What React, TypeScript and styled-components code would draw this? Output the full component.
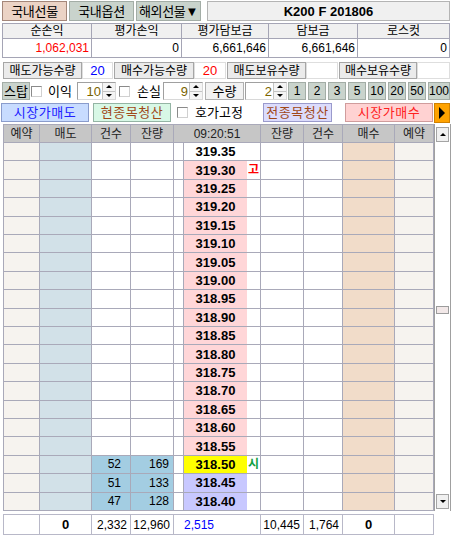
import React from 'react';
import styled, {createGlobalStyle} from 'styled-components';

const GlobalStyle = createGlobalStyle`
	* {
		box-sizing: border-box;
	}
	body {
		margin: 0;
		background: #fff;
		font-family: 'Liberation Sans', 'Noto Sans CJK KR', sans-serif;
		font-size: 12px;
		color: #000;
	}
`;

const StyledScreen = styled.div`
	width: 451px;
	height: 535px;
	padding-top: 1px;
	overflow: hidden;
	display: flex;
	flex-direction: column;
`;

/* top tabs */
const StyledTopBar = styled.div`
	display: flex;
	height: 20px;
	padding-left: 2px;
	gap: 2px;
`;

const StyledTab = styled.div<{$active?: boolean}>`
	width: 65px;
	display: flex;
	align-items: center;
	justify-content: center;
	font-size: 13px;
	line-height: 1;
	letter-spacing: -0.3px;
	background: ${(p) => (p.$active ? '#ebd3c5' : '#c9d3cc')};
	border: 1px solid ${(p) => (p.$active ? '#a4877a' : '#a3ada6')};
`;

const StyledTitle = styled.div`
	margin-left: 4px;
	width: 243px;
	display: flex;
	align-items: center;
	justify-content: center;
	background: #f0f0f0;
	border: 1px solid #b4b4b4;
	font-weight: bold;
	font-size: 13px;
`;

/* summary table */
const StyledSummary = styled.div`
	margin: 2px 0 0 2px;
	width: 448px;
	display: grid;
	grid-template-columns: 88px 89px 86px 88px 91px;
	grid-template-rows: 14px 18px;
	gap: 1px;
	padding: 1px;
	background: #a5a5b5;
`;

const StyledSumHead = styled.div`
	background: #f0f0f0;
	display: flex;
	align-items: center;
	justify-content: center;
	line-height: 1;
`;

const StyledSumValue = styled.div<{$color?: string}>`
	background: #fff;
	display: flex;
	align-items: center;
	justify-content: flex-end;
	padding-right: 2px;
	color: ${(p) => p.$color ?? '#000'};
`;

/* quantities */
const StyledQtyRow = styled.div`
	display: flex;
	height: 17px;
	margin: 4px 0 0 3px;
	gap: 1px;
`;

const StyledQtyPair = styled.div`
	display: flex;
`;

const StyledQtyLabel = styled.div<{$w: number}>`
	width: ${(p) => p.$w}px;
	display: flex;
	align-items: center;
	justify-content: center;
	background: #ebebeb;
	border: 1px solid #a6a6a6;
	line-height: 1;
`;

const StyledQtyValue = styled.div<{$w: number; $color?: string}>`
	width: ${(p) => p.$w}px;
	display: flex;
	align-items: center;
	justify-content: center;
	background: #fff;
	border: 1px solid #dedede;
	font-size: 13px;
	color: ${(p) => p.$color ?? '#000'};
`;

/* stop row */
const StyledStopRow = styled.div`
	display: flex;
	align-items: center;
	height: 18px;
	margin-top: 3px;
	padding-left: 2px;
`;

const StyledGrayButton = styled.div<{$w: number; $ml?: number}>`
	width: ${(p) => p.$w}px;
	height: 18px;
	margin-left: ${(p) => p.$ml ?? 0}px;
	display: flex;
	align-items: center;
	justify-content: center;
	background: #c9d3cc;
	border: 1px solid #a3ada6;
	font-size: 13px;
	line-height: 1;
`;

const StyledLightBox = styled.div<{$w: number; $ml?: number}>`
	width: ${(p) => p.$w}px;
	height: 18px;
	margin-left: ${(p) => p.$ml ?? 0}px;
	display: flex;
	align-items: center;
	justify-content: center;
	background: #f2f2f2;
	border: 1px solid #b0b0b0;
	font-size: 13px;
	line-height: 1;
`;

const StyledCheck = styled.div<{$ml?: number}>`
	width: 11px;
	height: 11px;
	margin-left: ${(p) => p.$ml ?? 0}px;
	background: #fff;
	border: 1px solid #8a8a8a;
	border-right-color: #d0d0d0;
	border-bottom-color: #d0d0d0;
	flex-shrink: 0;
`;

const StyledInlineLabel = styled.div<{$w: number; $pl: number}>`
	width: ${(p) => p.$w}px;
	padding-left: ${(p) => p.$pl}px;
	font-size: 13px;
	line-height: 1;
	white-space: nowrap;
`;

const StyledSpin = styled.div<{$w: number; $ml?: number}>`
	width: ${(p) => p.$w}px;
	height: 18px;
	margin-left: ${(p) => p.$ml ?? 0}px;
	display: flex;
	background: #fff;
	border: 1px solid #a0a0a0;
	border-right-color: #d8d8d8;
	border-bottom-color: #d8d8d8;
`;

const StyledSpinValue = styled.div`
	flex: 1;
	display: flex;
	align-items: center;
	justify-content: flex-end;
	padding-right: 1px;
	color: #7a6400;
	font-size: 13px;
`;

const StyledSpinArrows = styled.div`
	width: 13px;
	display: flex;
	flex-direction: column;
	border-left: 1px solid #c4c4c4;
`;

const StyledSpinHalf = styled.div`
	flex: 1;
	display: flex;
	align-items: center;
	justify-content: center;
	background: #f4f4f4;

	& + & {
		border-top: 1px solid #c4c4c4;
	}
`;

const StyledTri = styled.div<{$dir: 'up' | 'down' | 'right'; $size: number}>`
	width: 0;
	height: 0;
	${(p) =>
		p.$dir === 'up'
			? `border-left: ${p.$size}px solid transparent; border-right: ${p.$size}px solid transparent; border-bottom: ${p.$size}px solid #000;`
			: p.$dir === 'down'
			? `border-left: ${p.$size}px solid transparent; border-right: ${p.$size}px solid transparent; border-top: ${p.$size}px solid #000;`
			: `border-top: ${p.$size}px solid transparent; border-bottom: ${p.$size}px solid transparent; border-left: ${p.$size}px solid #000;`}
`;

const StyledNumButton = styled(StyledGrayButton)`
	font-size: 12px;
`;

/* action row */
const StyledActionRow = styled.div`
	display: flex;
	align-items: center;
	height: 19px;
	margin-top: 3px;
`;

const StyledActionButton = styled.div<{
	$w: number;
	$ml?: number;
	$bg: string;
	$border: string;
	$color: string;
}>`
	width: ${(p) => p.$w}px;
	height: 19px;
	margin-left: ${(p) => p.$ml ?? 0}px;
	display: flex;
	align-items: center;
	justify-content: center;
	background: ${(p) => p.$bg};
	border: 1px solid ${(p) => p.$border};
	color: ${(p) => p.$color};
	font-size: 13px;
	line-height: 1;
	letter-spacing: 0.5px;
`;

const StyledPlayButton = styled.div`
	width: 16px;
	height: 20px;
	margin-left: 1px;
	display: flex;
	align-items: center;
	justify-content: center;
	background: #ffa200;
	border: 1px solid #d08000;
`;

/* order book */
const bookColumns = '35px 51px 38px 42px 9px 76px 42px 38px 51px 38px';

const StyledBookArea = styled.div`
	display: flex;
	height: 387px;
	margin-top: 2px;
`;

const StyledBook = styled.div`
	margin-left: 3px;
	width: 431px;
	display: grid;
	grid-template-columns: ${bookColumns};
	grid-template-rows: 17px repeat(20, 1fr);
	gap: 1px;
	padding: 1px;
	background: #a9a9b9;
`;

const StyledHeadCell = styled.div<{$span?: number}>`
	grid-column: span ${(p) => p.$span ?? 1};
	background: #c6c6c6;
	display: flex;
	align-items: center;
	justify-content: center;
	color: #222;
	line-height: 1;
`;

const StyledCell = styled.div<{
	$bg?: string;
	$align?: 'flex-start' | 'center' | 'flex-end';
	$pr?: number;
	$pl?: number;
	$bold?: boolean;
	$color?: string;
	$span?: number;
}>`
	grid-column: span ${(p) => p.$span ?? 1};
	background: ${(p) => p.$bg ?? '#fff'};
	display: flex;
	align-items: center;
	justify-content: ${(p) => p.$align ?? 'flex-end'};
	padding: 0 ${(p) => p.$pr ?? 0}px 0 ${(p) => p.$pl ?? 0}px;
	font-weight: ${(p) => (p.$bold ? 'bold' : 'normal')};
	font-size: ${(p) => (p.$bold ? 13 : 12)}px;
	color: ${(p) => p.$color ?? '#000'};
	line-height: 1;
	min-height: 0;
`;

const StyledPriceCell = styled.div`
	display: flex;
	background: #fff;
	min-height: 0;
`;

const StyledPrice = styled.div<{$bg: string}>`
	width: 63px;
	display: flex;
	align-items: center;
	justify-content: center;
	background: ${(p) => p.$bg};
	font-weight: bold;
	font-size: 13px;
	line-height: 1;
`;

const StyledMarker = styled.div<{$color?: string}>`
	flex: 1;
	display: flex;
	align-items: center;
	justify-content: center;
	font-weight: bold;
	font-size: 12px;
	line-height: 1;
	color: ${(p) => p.$color ?? '#000'};
`;

const StyledScrollbar = styled.div`
	width: 17px;
	display: flex;
	flex-direction: column;
	padding: 3px 1px 2px;
	background: #fff;
	border-left: 1px solid #a0a0a0;
	border-right: 1px solid #a0a0a0;
`;

const StyledScrollButton = styled.div`
	height: 15px;
	display: flex;
	align-items: center;
	justify-content: center;
	background: #f0f0f0;
	border: 1px solid #a4a4a4;
`;

const StyledTrack = styled.div`
	flex: 1;
	display: flex;
	flex-direction: column;
`;

const StyledThumb = styled.div`
	height: 8px;
	background: #f2e8e8;
	border: 1px solid #9c9c9c;
`;

const StyledTotals = styled.div`
	margin: 3px 0 0 3px;
	width: 431px;
	height: 21px;
	display: grid;
	grid-template-columns: ${bookColumns};
	gap: 1px;
	padding: 1px;
	background: #b8b8c8;
`;

const COLORS = {
	reserve: '#f6f3ef',
	sell: '#d2e1e8',
	buy: '#f1dcc9',
	qty: '#a3cde2',
	pink: '#ffd6d8',
	yellow: '#ffff00',
	lavender: '#c8c8ff'
};

const prices = Array.from({length: 20}, (_, i) => (319.35 - i * 0.05).toFixed(2));

const priceBg = (i: number) =>
	i === 0 ? '#fff' : i <= 16 ? COLORS.pink : i === 17 ? COLORS.yellow : COLORS.lavender;

const markers: Record<number, [string, string]> = {
	1: ['고', '#ff0000'],
	17: ['시', '#10a040']
};

const sellQty: Record<number, [string, string]> = {
	17: ['52', '169'],
	18: ['51', '133'],
	19: ['47', '128']
};

const summary = [
	{label: '순손익', value: '1,062,031', color: '#ff0000'},
	{label: '평가손익', value: '0'},
	{label: '평가담보금', value: '6,661,646'},
	{label: '담보금', value: '6,661,646'},
	{label: '로스컷', value: '0'}
];

const qtys = [
	{label: '매도가능수량', lw: 79, vw: 31, value: '20', color: '#0000ff'},
	{label: '매수가능수량', lw: 80, vw: 32, value: '20', color: '#ff0000'},
	{label: '매도보유수량', lw: 79, vw: 32, value: ''},
	{label: '매수보유수량', lw: 78, vw: 33, value: ''}
];

const quick = ['1', '2', '3', '5', '10', '20', '50', '100'];

const Spin = ({w, ml, value}: {w: number; ml?: number; value: string}) => (
	<StyledSpin $w={w} $ml={ml}>
		<StyledSpinValue>{value}</StyledSpinValue>
		<StyledSpinArrows>
			<StyledSpinHalf>
				<StyledTri $dir='up' $size={3} />
			</StyledSpinHalf>
			<StyledSpinHalf>
				<StyledTri $dir='down' $size={3} />
			</StyledSpinHalf>
		</StyledSpinArrows>
	</StyledSpin>
);

const scrollRatio = 0.465;
const trackHeight = 353;

const App = () => (
	<StyledScreen>
		<GlobalStyle />
		<StyledTopBar>
			<StyledTab $active>국내선물</StyledTab>
			<StyledTab>국내옵션</StyledTab>
			<StyledTab>해외선물▼</StyledTab>
			<StyledTitle>K200 F 201806</StyledTitle>
		</StyledTopBar>

		<StyledSummary>
			{summary.map((s) => (
				<StyledSumHead key={s.label}>{s.label}</StyledSumHead>
			))}
			{summary.map((s) => (
				<StyledSumValue key={s.label} $color={s.color}>
					{s.value}
				</StyledSumValue>
			))}
		</StyledSummary>

		<StyledQtyRow>
			{qtys.map((q) => (
				<StyledQtyPair key={q.label}>
					<StyledQtyLabel $w={q.lw}>{q.label}</StyledQtyLabel>
					<StyledQtyValue $w={q.vw} $color={q.color}>
						{q.value}
					</StyledQtyValue>
				</StyledQtyPair>
			))}
		</StyledQtyRow>

		<StyledStopRow>
			<StyledGrayButton $w={28}>스탑</StyledGrayButton>
			<StyledCheck $ml={1} />
			<StyledInlineLabel $w={35} $pl={6}>
				이익
			</StyledInlineLabel>
			<Spin w={39} value='10' />
			<StyledCheck $ml={3} />
			<StyledInlineLabel $w={33} $pl={7}>
				손실
			</StyledInlineLabel>
			<Spin w={40} value='9' />
			<StyledLightBox $w={39} $ml={2}>
				수량
			</StyledLightBox>
			<Spin w={42} ml={1} value='2' />
			{quick.map((n, i) => (
				<StyledNumButton key={n} $w={n === '100' ? 22 : 18} $ml={i === 0 ? 1 : 2}>
					{n}
				</StyledNumButton>
			))}
		</StyledStopRow>

		<StyledActionRow>
			<StyledActionButton $w={88} $ml={1} $bg='#c8dcff' $border='#8a9ccc' $color='#2020ff'>
				시장가매도
			</StyledActionButton>
			<StyledActionButton $w={78} $ml={4} $bg='#d8f8e6' $border='#94b4a4' $color='#a04818'>
				현종목청산
			</StyledActionButton>
			<StyledCheck $ml={6} />
			<StyledInlineLabel $w={75} $pl={7}>
				호가고정
			</StyledInlineLabel>
			<StyledActionButton $w={69} $bg='#dcdcfc' $border='#9a9acc' $color='#a04818'>
				전종목청산
			</StyledActionButton>
			<StyledActionButton $w={88} $ml={13} $bg='#ffd2d2' $border='#d09c9c' $color='#ff2020'>
				시장가매수
			</StyledActionButton>
			<StyledPlayButton>
				<StyledTri $dir='right' $size={6} />
			</StyledPlayButton>
		</StyledActionRow>

		<StyledBookArea>
			<StyledBook>
				<StyledHeadCell>예약</StyledHeadCell>
				<StyledHeadCell>매도</StyledHeadCell>
				<StyledHeadCell>건수</StyledHeadCell>
				<StyledHeadCell>잔량</StyledHeadCell>
				<StyledHeadCell $span={2}>09:20:51</StyledHeadCell>
				<StyledHeadCell>잔량</StyledHeadCell>
				<StyledHeadCell>건수</StyledHeadCell>
				<StyledHeadCell>매수</StyledHeadCell>
				<StyledHeadCell>예약</StyledHeadCell>
				{prices.map((price, i) => {
					const q = sellQty[i];
					const m = markers[i];
					return (
						<React.Fragment key={price}>
							<StyledCell $bg={COLORS.reserve} />
							<StyledCell $bg={COLORS.sell} />
							<StyledCell $bg={q ? COLORS.qty : '#fff'} $pr={9}>
								{q?.[0]}
							</StyledCell>
							<StyledCell $bg={q ? COLORS.qty : '#fff'} $pr={4}>
								{q?.[1]}
							</StyledCell>
							<StyledCell />
							<StyledPriceCell>
								<StyledPrice $bg={priceBg(i)}>{price}</StyledPrice>
								<StyledMarker $color={m?.[1]}>{m?.[0]}</StyledMarker>
							</StyledPriceCell>
							<StyledCell />
							<StyledCell />
							<StyledCell $bg={COLORS.buy} />
							<StyledCell $bg={COLORS.reserve} />
						</React.Fragment>
					);
				})}
			</StyledBook>
			<StyledScrollbar>
				<StyledScrollButton>
					<StyledTri $dir='up' $size={3} />
				</StyledScrollButton>
				<StyledTrack>
					<StyledThumb style={{marginTop: Math.round(trackHeight * scrollRatio)}} />
				</StyledTrack>
				<StyledScrollButton>
					<StyledTri $dir='down' $size={3} />
				</StyledScrollButton>
			</StyledScrollbar>
		</StyledBookArea>

		<StyledTotals>
			<StyledCell />
			<StyledCell $align='center' $bold>
				0
			</StyledCell>
			<StyledCell $pr={3}>2,332</StyledCell>
			<StyledCell $pr={3}>12,960</StyledCell>
			<StyledCell $span={2} $align='flex-start' $pl={10} $color='#0000ff'>
				2,515
			</StyledCell>
			<StyledCell $pr={3}>10,445</StyledCell>
			<StyledCell $pr={3}>1,764</StyledCell>
			<StyledCell $align='center' $bold>
				0
			</StyledCell>
			<StyledCell />
		</StyledTotals>
	</StyledScreen>
);

export default App;
